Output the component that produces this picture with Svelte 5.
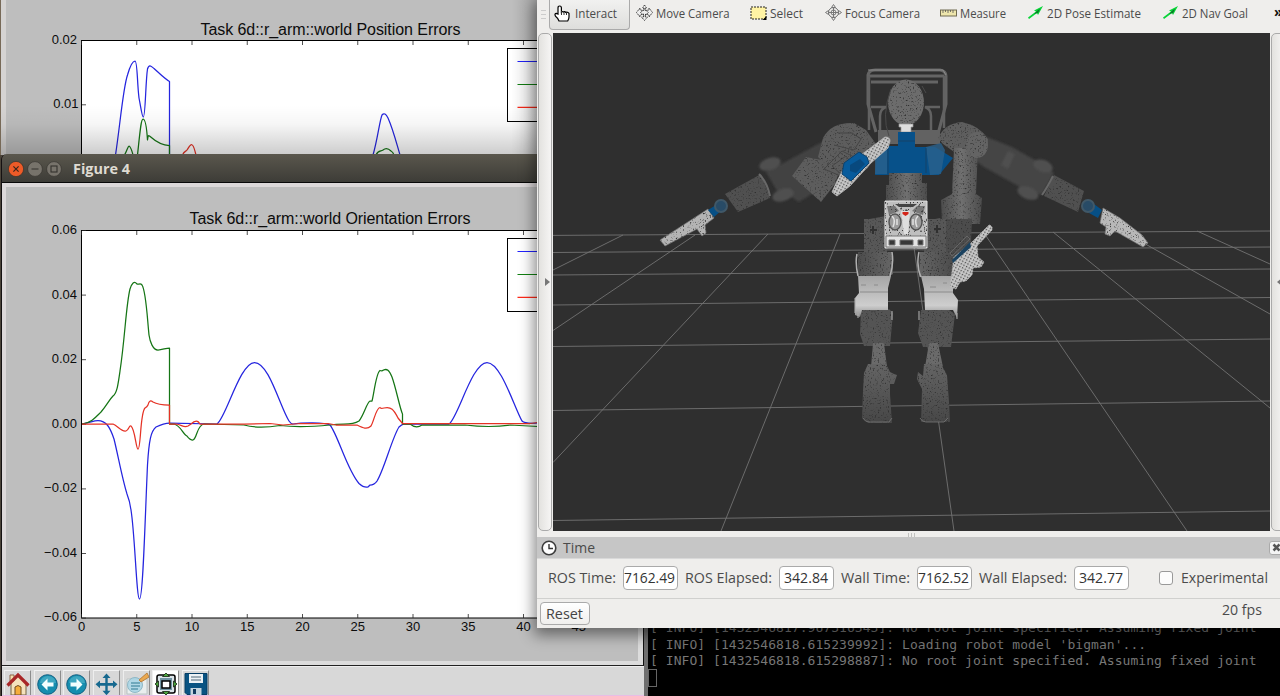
<script>
  const xt = [0, 1, 2, 3, 4, 5, 6, 7, 8];
  const yLabels = ['0.06', '0.04', '0.02', '0.00', '−0.02', '−0.04', '−0.06'];
  const rows = [[235.4, 231], [252.5, 247], [275, 269], [305, 297.5], [346.5, 339], [410.5, 401], [520.5, 511]];
  const rays = [
    [553, 270, 623, 235], [553, 330.5, 695, 235], [553, 462.5, 768, 234], [721, 531, 840, 234],
    [954, 531, 912, 233], [1187, 531, 984, 233], [1270, 408, 1053, 232], [1270, 314, 1124, 232], [1270, 264, 1197, 231]
  ];
  const fields = [
    { label: 'ROS Time:', value: '7162.49', lw: 68, vw: 51, cut: true },
    { label: 'ROS Elapsed:', value: '342.84', lw: 87, vw: 44 },
    { label: 'Wall Time:', value: '7162.52', lw: 69, vw: 51, cut: true },
    { label: 'Wall Elapsed:', value: '342.77', lw: 88, vw: 44 }
  ];
  const log = [
    '[ INFO] [1432546817.967316343]: No root joint specified. Assuming fixed joint',
    "[ INFO] [1432546818.615239992]: Loading robot model 'bigman'...",
    '[ INFO] [1432546818.615298887]: No root joint specified. Assuming fixed joint'
  ];
  let seed = 11;
  const rnd = () => (seed = (seed * 16807) % 2147483647) / 2147483647;
  const grit = Array.from({ length: 150 }, () => [Math.floor(rnd() * 42), Math.floor(rnd() * 50)]);
</script>

{#snippet fit(text, w, size)}
  <svg class="fit" width={w} height="20"><text x="0" y="15" font-size={size} textLength={w} lengthAdjust="spacingAndGlyphs">{text}</text></svg>
{/snippet}

{#snippet legend(y)}
  <rect x="507.5" y={y} width="60" height="73" fill="#fff" stroke="#000" />
  <path d="M517.5 {y + 13}h40" stroke="#2222ff" stroke-width="1.2" />
  <path d="M517.5 {y + 36}h40" stroke="#118011" stroke-width="1.2" />
  <path d="M517.5 {y + 58.8}h40" stroke="#ff2a1a" stroke-width="1.2" />
{/snippet}

<div class="desktop">
  <section class="fig3">
    <svg width="538" height="155" class="plot">
      <rect x="81.5" y="40.5" width="497" height="200" fill="#fff" stroke="#000" />
      <path class="ticks" d={xt.map((i) => `M${81.5 + i * 55.25} 41v4`).join('') + 'M82 104.8h4'} />
      <text x="330.5" y="35" class="title" textLength="260">Task 6d::r_arm::world Position Errors</text>
      <text x="77" y="44" class="lab">0.02</text><text x="78.5" y="108" class="lab">0.01</text>
      <g class="curves">
        <path stroke="#2525df" d="M115.5 155C120 126 123 88 127.5 75C130 66 133 61 135 61C137.500 61 137 82 139 98C141 108 142 117 143.300 117C145.500 117 145.500 82 147.500 69C149 64 151 66 154 68.500C159 73 165 79 169.500 81.500V155M373 155C377 142 380 119 382 115C384 112.500 386 114 388 118C393 129 397 145 400 155" />
        <path stroke="#157515" d="M124.500 155C127 151 128 146 129 146C131 147 132 151 133 155M137.500 155C140 132 141 119 143 119C145.500 119 147 132 147.500 140C148 137 148 134.500 149.500 136C154 140 162 145.500 169.500 145.500V155M376 155C378 150 381 151.500 383 150C386 147.500 389 149 391 151Q393 152 394 155" />
        <path stroke="#e53225" d="M182.500 155C184 151 186 151.500 187 150C189 147 190 144.500 191.500 144.500C194 145 194.500 150 196 155" />
      </g>
      {@render legend(48.5)}
    </svg>
    <div class="shade"></div>
  </section>

  <section class="term">
    <div class="log">{#each log as l}<div>{l}</div>{/each}<i class="cursor"></i></div>
  </section>

  <section class="fig4">
    <header>
      <svg width="56" height="20" viewBox="0 0 56 20">
        <circle cx="8" cy="10" r="7.600" fill="#ee5b28" stroke="#39332c" stroke-width=".7" /><path d="M5.400 7.400l5.200 5.200m0-5.200l-5.200 5.200" stroke="#3b251c" stroke-width="1.200" />
        <circle cx="27" cy="10" r="7.400" fill="#77736b" stroke="#36342f" stroke-width=".7" /><path d="M23.500 10h7" stroke="#33312d" stroke-width="1.200" />
        <circle cx="46" cy="10" r="7.400" fill="#77736b" stroke="#36342f" stroke-width=".7" /><rect x="43" y="7" width="6" height="6" fill="none" stroke="#33312d" stroke-width="1.100" />
      </svg>
      <b>{@render fit('Figure 4', 57, 13.5)}</b>
    </header>
    <div class="canvas">
      <svg width="641" height="482" viewBox="2 183 641 482" class="plot">
        <rect x="81.500" y="230.500" width="497" height="387.500" fill="#fff" stroke="#000" />
        <path class="ticks" d={xt.map((i) => `M${81.5 + i * 55.25} 231v4m0 383v-4`).join('') + yLabels.map((_, i) => `M82 ${230.5 + i * 64.6}h4`).join('')} />
        <text x="330" y="224" class="title" textLength="281">Task 6d::r_arm::world Orientation Errors</text>
        {#each yLabels as l, i}<text x="77" y={234 + i * 64.5} class="lab">{l}</text>{/each}
        {#each [...xt, 9] as i}<text x={81.5 + i * 55.25} y="631" class="lab xl">{i * 5}</text>{/each}
        <g class="curves">
          <path stroke="#2525df" d="M82 424C90 423 93 420.500 98 420.500C106 420.500 110 427 114 439C118 455 122 478 127 494C129 499 130 502 131 510C135 535 136.500 599 139.500 599C143 599 145 520 147.500 465C149 440 151 431 156 427C162 424 165 423 169.500 423L217 424C226 418 240 362.500 254.500 362.500C269 362.500 280 407 289 421Q291 424 293 424C301 422.500 325 422 330 425C338 435 347 470 359 483.500Q364 488 368 487L370 485Q374 485 377 481C384 470 392 438 399 427Q402 424 404 424L449 424C458 418 472 362.500 487 362.500C501 362.500 514 407 522 421Q525 424 538 423" />
          <path stroke="#157515" d="M82 424C91 423 96 417 101 412C107 405 109 400 113 396C117 393 118 385 120 371C125 338 126 305 130 289C132 283 134 280.500 137 284C139 285 140 282.500 142 285C146 291 147 315 149 335C150 342 153 350 158 350C162 350 166 348 169.500 348V424H174C180 425 183 434 187 436Q190 440 193 440C197 439 197 424.500 204 424L244 425Q258 429 280 425.500Q300 428 330 425C345 423 351 426 359 421C364 415 367 402 370 401H372C374 394 376 373 380 370.500Q382 371.500 383.500 370C387 368.500 389 370 392 377C396 388 400 409 402.500 414V424H410Q416 429 422 425L465 425Q490 428 510 425L538 426.500" />
          <path stroke="#e53225" d="M82 424H113C118 426 121 432 126 431C129 430 129 425 131 426C135 429 136 449 138 449C141 449 140 413 145 408Q147 407 148 405C149 400 151 400.500 153 402C158 405 163 405 169.500 405V424H176C182 425 184 428 188 426L191 424Q197 418 200 424H244L270 423.500L283 425L300 423.500L328 423.500L336 425H357C363 428 367 430 371 426C374 421 376 408 380 407.500Q381 409 384 408C391 406 394 410 398 418L402.500 423.500L488 423.500L530 423.500L538 422.500" />
        </g>
        {@render legend(238.5)}
      </svg>
    </div>
    <footer>
      <div class="tb"><svg viewBox="0 0 26 26"><path d="M6 12v12h15V12l-8-7z" fill="#f5e2bd" stroke="#756343" /><path d="M5 4h4v6H5z" fill="#f6dfb0" stroke="#8b6548" /><path d="M2.500 14.500L13 4l10.500 10.500" fill="none" stroke="#a82627" stroke-width="3.200" /><path d="M10 24v-8q3-3 6 0v8z" fill="#f5ad3c" stroke="#704b21" /></svg></div>
      <div class="tb"><svg viewBox="0 0 26 26"><circle cx="12.5" cy="13.5" r="9.800" fill="#168eaf" stroke="#125f82" /><path d="M5 12a8 7 0 0 1 16 0z" fill="#63bfd1" opacity=".5" /><path d="M6.500 13.500l6-6v4h6v4h-6v4z" fill="#f3ffff" /></svg></div>
      <div class="tb"><svg viewBox="0 0 26 26"><circle cx="12.5" cy="13.5" r="9.800" fill="#168eaf" stroke="#125f82" /><path d="M5 12a8 7 0 0 1 16 0z" fill="#63bfd1" opacity=".5" /><path d="M18.500 13.500l-6-6v4h-6v4h6v4z" fill="#f3ffff" /></svg></div>
      <div class="tb"><svg viewBox="0 0 26 26"><path d="M12.500 2.500l4 4.500h-2.800v5h5.300V9.500l4.500 3.800-4.500 4V14.700h-5.300v5h2.800l-4 4.500-4-4.500h2.800v-5H6v2.600l-4.500-4L6 9.500V12h5.300V7H8.500z" fill="#17698f" /></svg></div>
      <div class="tb"><svg viewBox="0 0 26 26"><path d="M3 8h20v15H3z" fill="#e9eeee" stroke="#bac4c5" /><circle cx="11" cy="14" r="7.500" fill="#a7d4e4" fill-opacity=".85" stroke="#8fb8c6" /><path d="M7 12h9m-9 3h9m-9 3h7" stroke="#5b99ae" stroke-width="1.500" /><path d="M15 9l8-7 2 4-8 5z" fill="#eba950" stroke="#b98240" /></svg></div>
      <div class="tb"><svg viewBox="0 0 26 26"><path d="M0 0h26v26H0z" fill="#fff" /><rect x="4" y="4" width="18" height="18" rx="2" fill="#dce5ea" stroke="#000" stroke-width="1.500" /><path d="M7 7h12v12H7z" fill="#7194a3" /><path d="M9 10h8v7H9z" fill="#fff" stroke="#000" stroke-width="1.500" /><path d="M9.500 5.500l3.500-3.500 3.500 3.500zM9.500 20.500l3.500 3.500 3.500-3.500zM5.500 10L2 13l3.500 3zM20.500 10l3.500 3-3.500 3z" fill="#4ba63d" stroke="#12220e" stroke-width=".8" /></svg></div>
      <div class="tb"><svg viewBox="0 0 26 26"><path d="M2 2.500h22v21H4l-2-2z" fill="#095382" stroke="#073e65" /><path d="M6 3h14v9H6z" fill="#edf2f5" /><path d="M8 6h10m-10 3h10" stroke="#4e697a" /><path d="M7.500 17h11v7h-11z" fill="#c5d5df" /><path d="M10 18h3v5h-3z" fill="#123c60" /></svg></div>
    </footer>
  </section>

  <section class="rviz">
    <nav>
      <div class="grip"></div>
      <div class="tool on"><svg class="ic" viewBox="0 0 17 17"><path d="M4 9V3q0-2 1.700-2T7.400 3v4q1-1 2 0 1.300-1 2.300.4 2-.8 3.300 1V12q0 2-1.300 4H5Q4 13 1.500 11.200 0 8.500 2.500 8.400z" fill="#fff" stroke="#000" stroke-width="1.200" /><path d="M7.500 6v4m2.500-3v3m2.500-2v2" stroke="#333" /></svg>{@render fit('Interact', 42, 12)}</div>
      <div class="tool" style="width:114px"><svg class="ic" viewBox="0 0 17 17"><path d="M8.500 1l2 3H9.300v2.500L13 6V4l3.500 4.500L13 13v-2l-3.500-1v3h2l-3 3.500-3-3.500h2v-3L4 11v2L.500 8.500 4 4v2l3.700.500V4H6.500zM4.500 8.500L8.500 5l4 3.500-4 3.500z" fill="#eee" stroke="#333" stroke-width=".9" stroke-dasharray="1.600 .7" /></svg>{@render fit('Move Camera', 73.5, 12)}</div>
      <div class="tool" style="width:75px"><svg class="ic" viewBox="0 0 17 17"><rect x="1" y="3" width="15" height="12" fill="#fff3a4" stroke="#222" stroke-dasharray="2 1" /><path d="M16.500 12v4h-4z" /></svg>{@render fit('Select', 33, 12)}</div>
      <div class="tool" style="width:115px"><svg class="ic" viewBox="0 0 17 17"><g fill="none" stroke="#777"><circle cx="8.500" cy="8.500" r="5" /><circle cx="8.500" cy="8.500" r="2.500" /><path d="M8.500.500l2 3h-4zm0 16l2-3h-4zM.500 8.500l3-2v4zm16 0l-3-2v4zM4 8.500h9M8.500 4v9" /></g></svg>{@render fit('Focus Camera', 75, 12)}</div>
      <div class="tool" style="width:87px"><svg class="ic" viewBox="0 0 17 17"><rect x=".500" y="6" width="16" height="6" fill="#eee6ac" stroke="#716b50" /><path d="M3 6v3m2.500-3v2m2.500-2v3m2.500-3v2m2.500-2v3" stroke="#555" stroke-width=".8" /></svg>{@render fit('Measure', 46, 12)}</div>
      <div class="tool" style="width:135px"><svg class="ic" viewBox="0 0 17 17"><path d="M16 2L11 11l-1-2-8 6-1-1.500 8-6-2-1z" fill="#08d438" /><path d="M9 8l-2 2 4-1 2-4-2 1z" fill="#077c25" /></svg>{@render fit('2D Pose Estimate', 94, 12)}</div>
      <div class="tool" style="width:112px"><svg class="ic" viewBox="0 0 17 17"><path d="M16 2L11 11l-1-2-8 6-1-1.500 8-6-2-1z" fill="#08d438" /><path d="M9 8l-2 2 4-1 2-4-2 1z" fill="#077c25" /></svg>{@render fit('2D Nav Goal', 66, 12)}</div>
      <span class="more">»</span>
    </nav>
    <div class="main">
      <div class="side"><svg width="7" height="8"><path d="M1 0l5 4-5 4z" fill="#777" /></svg></div>
      <svg class="scene" width="717" height="498" viewBox="553 33 717 498">
        <defs>
          <filter id="speck" x="-5%" y="-5%" width="110%" height="110%" color-interpolation-filters="sRGB">
            <feTurbulence type="fractalNoise" baseFrequency=".6" numOctaves="2" seed="4" />
            <feColorMatrix values="0 0 0 0 .19 0 0 0 0 .19 0 0 0 0 .19 4 0 0 0 -2.3" result="n" />
            <feComposite in="n" in2="SourceGraphic" operator="in" result="c" />
            <feMerge><feMergeNode in="SourceGraphic" /><feMergeNode in="c" /></feMerge>
          </filter>
          <filter id="soft"><feGaussianBlur stdDeviation=".8" /></filter>
          <linearGradient id="cyl"><stop stop-color="#4c4c4c" /><stop offset=".5" stop-color="#707070" /><stop offset="1" stop-color="#4c4c4c" /></linearGradient>
          <linearGradient id="foot" x2="0" y2="1"><stop stop-color="#646464" /><stop offset="1" stop-color="#474747" /></linearGradient>
          <linearGradient id="shin" x2="0" y2="1"><stop stop-color="#a5a5a5" /><stop offset=".7" stop-color="#cecece" /><stop offset="1" stop-color="#868686" /></linearGradient>
          <pattern id="dots" width="3" height="3" patternUnits="userSpaceOnUse" patternTransform="rotate(28)"><rect width="3" height="3" fill="#c8c8c8" /><rect width="1.300" height="1.300" fill="#4a4a4a" /></pattern>
        </defs>
        <rect x="553" y="33" width="717" height="498" fill="#2f2f2f" />
        <g stroke="#737373" stroke-width=".9" fill="none">
          {#each rows as r}<path d="M553 {r[0]}L1270 {r[1]}" />{/each}
          {#each rays as r}<path d="M{r[0]} {r[1]}L{r[2]} {r[3]}" />{/each}
        </g>
        <g fill="none">
          <path d="M876 132l-8-28v-29q1-5 7-5h65q6 1 6 6v28l-8 30M868 76h76M871 82h67" stroke="#646464" stroke-width="3" />
          <path d="M869 76v54M944 76v52M871 107h15q-6 2-6 9v20M940 107h-15q6 2 6 9v20" stroke="#626262" stroke-width="2.500" />
          <path d="M868 70h75l3 5" stroke="#898989" />
        </g>
        <path d="M878 130h62v14h-62z" fill="#626262" />
        <g filter="url(#soft)">
          <path d="M766 172l12-6 44-24 16-10 20 0-24 48-35 22-12-8-8 0z" fill="#434343" />
          <g fill="#505050"><ellipse cx="770" cy="164" rx="11" ry="6" transform="rotate(-18 770 164)" /><ellipse cx="783" cy="195" rx="11" ry="6" transform="rotate(-18 783 195)" /></g>
          <path d="M974 132l38 15 28 16 14 10-12 22-22-8-36-20-20-14z" fill="#454545" />
          <g fill="#505050"><ellipse cx="1043" cy="166" rx="10" ry="6" transform="rotate(20 1043 166)" /><ellipse cx="1028" cy="193" rx="11" ry="6" transform="rotate(20 1028 193)" /><path d="M1008 151l7 3-7 15-7-4z" /></g>
        </g>
        <path d="M725 194l36-20 9 24-32 14zM1054 175l30 16-6 21-34-16z" fill="#505050" filter="url(#speck)" />
        <path d="M759 174q8 8 11 22M1053 176q-6 12-11 19" stroke="#686868" stroke-width="2" fill="none" />
        <g filter="url(#speck)">
          <path d="M823 138q8-16 31-15l12 7 10 14-8 24-20 13-12-7-18-17z" fill="#5d5d5d" />
          <path d="M806 157l16 3 16 15-3 9-14 18-29-26z" fill="#5d5d5d" />
          <path d="M938 138q7-15 24-16 18 4 26 17 0 16-14 19l-17-4-14-10z" fill="#5e5e5e" />
          <path d="M954 148h24l-2 46 6 4-2 26h-38l-1-24 11-6z" fill="url(#cyl)" />
          <ellipse cx="977" cy="145" rx="11" ry="13" fill="#646464" />
          <path d="M946 219h26l-1 23-20 19-8-7z" fill="#4c4c4c" />
        </g>
        <ellipse cx="906" cy="102.500" rx="18" ry="23" fill="#6c6c6c" filter="url(#speck)" />
        <path d="M824 169l18-18 18 9-17 17zM832 166l14-10 8 11-12 8zM838 133h14l9 6-7 11-20-5" fill="none" stroke="#454545" />
        <path d="M889 136q-8-20 2-47M922 86l4 7" stroke="#4a4a4a" fill="none" />
        <path d="M899 124h14v3h-2v5h-10v-5h-2z" fill="#ddd" stroke="#999" stroke-width=".7" />
        <path d="M898 132h17v15h20l18 11-14 17h-64l3-29h20z" fill="#07518a" />
        <path d="M875 148h12v26h-12zM926 147l15-4 4 7-4 24-11 1z" fill="#2b628c" opacity=".8" />
        <path d="M898 141h17m-27 34V148m38 25v-25" stroke="#164267" fill="none" />
        <g filter="url(#speck)">
          <path d="M889 173h33v10h5v17h-6v5h-32v-5h-3v-15h3z" fill="url(#cyl)" />
          <path d="M864 220l22-4 5 14-4 22-23-1zM920 222l20-4 5 8-4 26-24-2z" fill="#565656" />
          <path d="M864 219h22v33h-22zM926 219h20v33h-22z" fill="#575757" />
          <path d="M858 252h34l1 22-5 3h-30zM920 252h33v25h-34z" fill="url(#cyl)" />
          <path d="M861 310l28-1 4 4-3 33h-26l-4-12zM921 310h28l6 4-4 33h-28l-5-14z" fill="#545454" />
          <path d="M873 343h11l3 24h-16zM929 343h9l5 24h-18z" fill="#6a6a6a" />
          <path d="M868 364h18l4 8 4 2 3 1-3 9h-4v10l2 29h-24l-6-5 1-27 1-18zM924 364h17l6 11 2 27 1 20h-29l1-33-5-10 1-7 5 4z" fill="url(#foot)" />
        </g>
        <path d="M863 418q2 4 6 4h20l3-4M920 418q2 4 6 4h18l4-4" stroke="#777" stroke-width=".8" fill="none" />
        <path d="M857 254q-2 9 1 22m34-24q2 12-2 24m29-24q-3 14 2 25" stroke="#b0b0b0" stroke-width="1.500" fill="none" />
        <path d="M858 276h33l-3 12v22h-26l-2 7-5-2v-17l4-5zM921 276h32v17l5 7-1 18-4-8h-28l-1-21z" fill="url(#shin)" />
        <path d="M860 292h28m36 0h29M861 285h5m8 0h4m52 2h6m7-4h4" stroke="#8b8b8b" stroke-width="1.2" fill="none" />
        <path d="M855 298v15m3 0v5m34-7v9m27-9v9m38-7v6" stroke="#aaa" stroke-width="1.100" />
        <path d="M870 230h7m-4-4v8m61-5h7m-4-4v8" stroke="#303030" stroke-width="2" />
        <path d="M885 201h42v47h-42z" fill="#bfbfbf" stroke="#e2e2e2" />
        <path d="M887 206h8l4 5-10 4zM925 206h-8l-5 5 11 4z" fill="#777" />
        <g fill="#3d3d3d">{#each grit as g}<rect x={885 + g[0]} y={202 + g[1] * 0.7} width="1" height="1" />{/each}</g>
        <path d="M895 204h22l-4 3h-14z" fill="#444" />
        <g fill="#9c9c9c" stroke="#555" stroke-width="1.5"><ellipse cx="895" cy="222" rx="6" ry="8" /><ellipse cx="916" cy="222" rx="6" ry="8" /></g>
        <path d="M892 216q4 4 1 11m4-8v6m21-9q-4 4-1 11m-4-8v6" stroke="#e2e2e2" stroke-width="1.500" fill="none" />
        <path d="M901 211h9l-2 23h-4z" fill="#dedede" /><path d="M902.500 212h6v2l-3 2-3-2z" fill="#d32419" />
        <path d="M886 236h40v11h-40z" fill="#e4e4e4" stroke="#777" /><path d="M900 240h13v5h-13zM889 240h6v5h-6zM918 240h5v5h-5z" fill="#383838" stroke="#777" />
        <g filter="url(#speck)">
          <path d="M708 209l6 9-9 7 1 8-4 3-5-7-32 17-5-6 31-20z" fill="#b4b4b4" stroke="#777" stroke-width=".7" />
          <path d="M1103 208l17 10 22 17 6 8-5 4-28-16-5 5-5-2 1-7-6-4z" fill="#b8b8b8" stroke="#777" stroke-width=".7" />
        </g>
        <path d="M708 210l8-5 7 4-9 8zM1094 204l8 6-4 8-9-5z" fill="#064f85" />
        <g fill="#284b66" stroke="#405868" stroke-width="2"><circle cx="721" cy="206" r="6" /><circle cx="1088" cy="206" r="6" /></g>
        <path d="M885 137q5 0 5 4l-2 7-17 15-21 23-13 10-5-4 5-11 8-15 20-14z" fill="url(#dots)" stroke="#bbb" stroke-width=".8" />
        <path d="M844 163l15-11 8 5 2 6-18 18-9-7z" fill="#075b9c" stroke="#0e416b" /><path d="M850 165l10-6 5 5-9 9-6-2z" fill="#08497e" />
        <path d="M989 225q4 1 3 5l-15 16 1 11 6 5-3 5-8 1-1 7-6 6-6 1-4 7-6-2 4-30 16-13z" fill="url(#dots)" stroke="#b9b9b9" stroke-width=".8" stroke-dasharray="2 1" />
        <path d="M952 260l18-18 1 5-18 16z" fill="#1a4260" />
        <path d="M950 253l17-17 3 3-18 17z" fill="none" stroke="#666" />
      </svg>
      <div class="side r"><svg width="7" height="8"><path d="M6 0l-5 4 5 4z" fill="#777" /></svg></div>
    </div>
    <div class="split"></div>
    <div class="dock">
      <svg width="16" height="16" viewBox="0 0 16 16"><circle cx="8" cy="8" r="6.800" fill="#fff" stroke="#3d3d3d" stroke-width="1.600" /><path d="M8 4v4.500h4" fill="none" stroke="#333" stroke-width="1.400" /></svg>
      {@render fit('Time', 32, 14)}
      <span class="close"><svg width="9" height="9"><path d="M1.500 1.500l6 6m0-6l-6 6" stroke="#555" stroke-width="2.500" /></svg></span>
    </div>
    <div class="values">
      {#each fields as f}
        {@render fit(f.label, f.lw, 14)}
        <div class="field" class:cut={f.cut}>{@render fit(f.value, f.vw, 14)}</div>
      {/each}
      <i class="check"></i>{@render fit('Experimental', 87, 14)}
    </div>
    <div class="status"><button>{@render fit('Reset', 37, 14)}</button><div class="fps">{@render fit('20 fps', 40, 14)}</div></div>
  </section>
</div>

<style>
  .desktop { position: relative; width: 1280px; height: 696px; overflow: hidden; background: #4a4339; font-family: "Open Sans", sans-serif; color: #4b4b4b; }
  svg { display: block; flex-shrink: 0; }
  section { position: absolute; overflow: hidden; box-sizing: border-box; }
  .fig3 { left: 0; top: 0; width: 538px; height: 155px; background: #bebebe; border-left: 1px solid #776957; box-shadow: inset 5px 0 #d5d3d2; }
  .fig3 .plot { margin-left: -1px; }
  .shade { position: absolute; inset: 0; background: linear-gradient(transparent 68%, #00000009 80%, #0003), linear-gradient(90deg, transparent 95%, #0002); }
  .plot { font-family: "Liberation Sans", sans-serif; }
  .plot text { fill: #0c0c0c; }
  .title { font-size: 16px; text-anchor: middle; }
  .lab { font-size: 13px; text-anchor: end; }
  .lab.xl { text-anchor: middle; }
  .ticks { stroke: #222; stroke-width: .8; fill: none; }
  .curves { fill: none; stroke-width: 1.25; stroke-linejoin: round; }
  .fig4 { left: 1px; top: 154px; width: 643px; height: 542px; border-left: 1px solid #151112; display: flex; flex-direction: column; border-radius: 6px 0 0 0; }
  .fig4 header { height: 28px; flex-shrink: 0; box-sizing: border-box; background: linear-gradient(#5a574d, #3d3c37); display: flex; align-items: center; padding: 2px 0 0 6px; gap: 9px; }
  .fig4 b { color: #dfdbd2; font-weight: 700; }
  .canvas { height: 484px; flex-shrink: 0; box-sizing: border-box; background: #bebebe; border-top: 1px solid #080808; border-bottom: 1px solid #222; border-right: 1px solid #111; box-shadow: inset 4px 4px #dcd8d9, inset -5px -4px #dcdcdc; }
  .fig4 footer { flex: 1; min-height: 0; box-sizing: border-box; overflow: hidden; background: #d8d8d8; display: flex; padding: 3px 0 0 2px; gap: 2.7px; border-top: 1px solid #eee; border-bottom: 1px solid #e8bce5; }
  .tb { width: 27px; height: 27px; box-sizing: border-box; border-right: 1px solid #8c8c8c; border-left: 1px solid #eee; border-top: 1px solid #f2f2f2; overflow: hidden; }
  .tb svg { width: 26px; height: 26px; }
  .term { left: 643px; top: 620px; width: 637px; height: 76px; background: #000; border-left: 5px solid #6f6f6f; }
  .log { font: 13px/16.5px "DejaVu Sans Mono", monospace; letter-spacing: .05px; color: #777; padding-left: 2px; white-space: pre; }
  .cursor { display: block; width: 7px; height: 16px; border: 1px solid #666; margin: -1px 0 0 -2px; }
  .rviz { left: 537px; top: 0; width: 743px; height: 628px; background: #efeeec; box-shadow: 0 4px 14px 3px #0007; display: flex; flex-direction: column; }
  .fit { overflow: visible; }
  .fit text { fill: currentColor; }
  nav { height: 33px; display: flex; align-items: flex-start; white-space: nowrap; overflow: hidden; }
  .grip { width: 12px; height: 10px; background: repeating-linear-gradient(#ccc 0 1px, transparent 1px 4px) 4px 0 / 5px 9px no-repeat; margin-top: 10px; flex-shrink: 0; }
  .tool { display: flex; align-items: center; gap: 3px; height: 25px; flex-shrink: 0; }
  .tool .ic { width: 17px; height: 17px; }
  .on { box-sizing: border-box; width: 81px; height: 30px; margin-right: 6px; padding: 0 0 3px 4px; background: linear-gradient(#f1f1f0, #dededc); border: 1px solid #aaa; border-top: 0; border-radius: 0 0 4px 4px; gap: 4px; }
  .more { color: #111; font: bold 14px/24px "Open Sans", sans-serif; }
  .main { height: 498px; display: flex; }
  .side { width: 14px; box-sizing: border-box; margin: 0 1px 0 1px; padding-left: 4px; border: 1px solid #aaa; border-radius: 5px; background: linear-gradient(90deg, #e3e2df, #f6f5f4); display: flex; align-items: center; justify-content: center; flex-shrink: 0; }
  .side.r { justify-content: flex-start; padding-left: 4px; }
  .split { height: 6px; background: repeating-linear-gradient(90deg, #c2c2c0 0 1px, transparent 1px 3px) 371px 2px / 8px 4px no-repeat; }
  .dock { height: 22px; background: #c6c6c6; display: flex; align-items: center; padding-left: 4px; gap: 6px; border-bottom: 1px solid #d9d9d9; box-sizing: border-box; }
  .close { margin-left: auto; width: 15px; height: 14px; border-radius: 3px; background: #f4f4f4; display: flex; align-items: center; justify-content: center; margin-right: -4px; border: 1px solid #aaa; box-sizing: border-box; }
  .values { height: 39px; box-sizing: content-box; display: flex; align-items: center; padding-left: 11px; gap: 7px; border-bottom: 1px solid #d0d0ce; }
  .values > :global(*) { margin-top: -2px; }
  .field { width: 55px; height: 24px; box-sizing: border-box; border: 1px solid #aaa; border-radius: 4px; background: #fff; display: flex; align-items: center; padding-left: 4px; overflow: hidden; color: #333; }
  .field.cut { padding-left: 0; }
  .check { width: 14px; height: 14px; box-sizing: border-box; border: 1px solid #999; border-radius: 3px; background: #fcfcfc; margin-left: 23px; margin-right: 1px; }
  .status { flex: 1; display: flex; justify-content: space-between; padding: 3px 18px 0 3px; }
  button { width: 50px; height: 23px; border: 1px solid #aaa; border-radius: 4px; background: linear-gradient(#fff, #f0efed); padding: 0 0 0 5px; font: inherit; color: #444; box-sizing: border-box; }
  .fps { margin-top: -2px; }
</style>
